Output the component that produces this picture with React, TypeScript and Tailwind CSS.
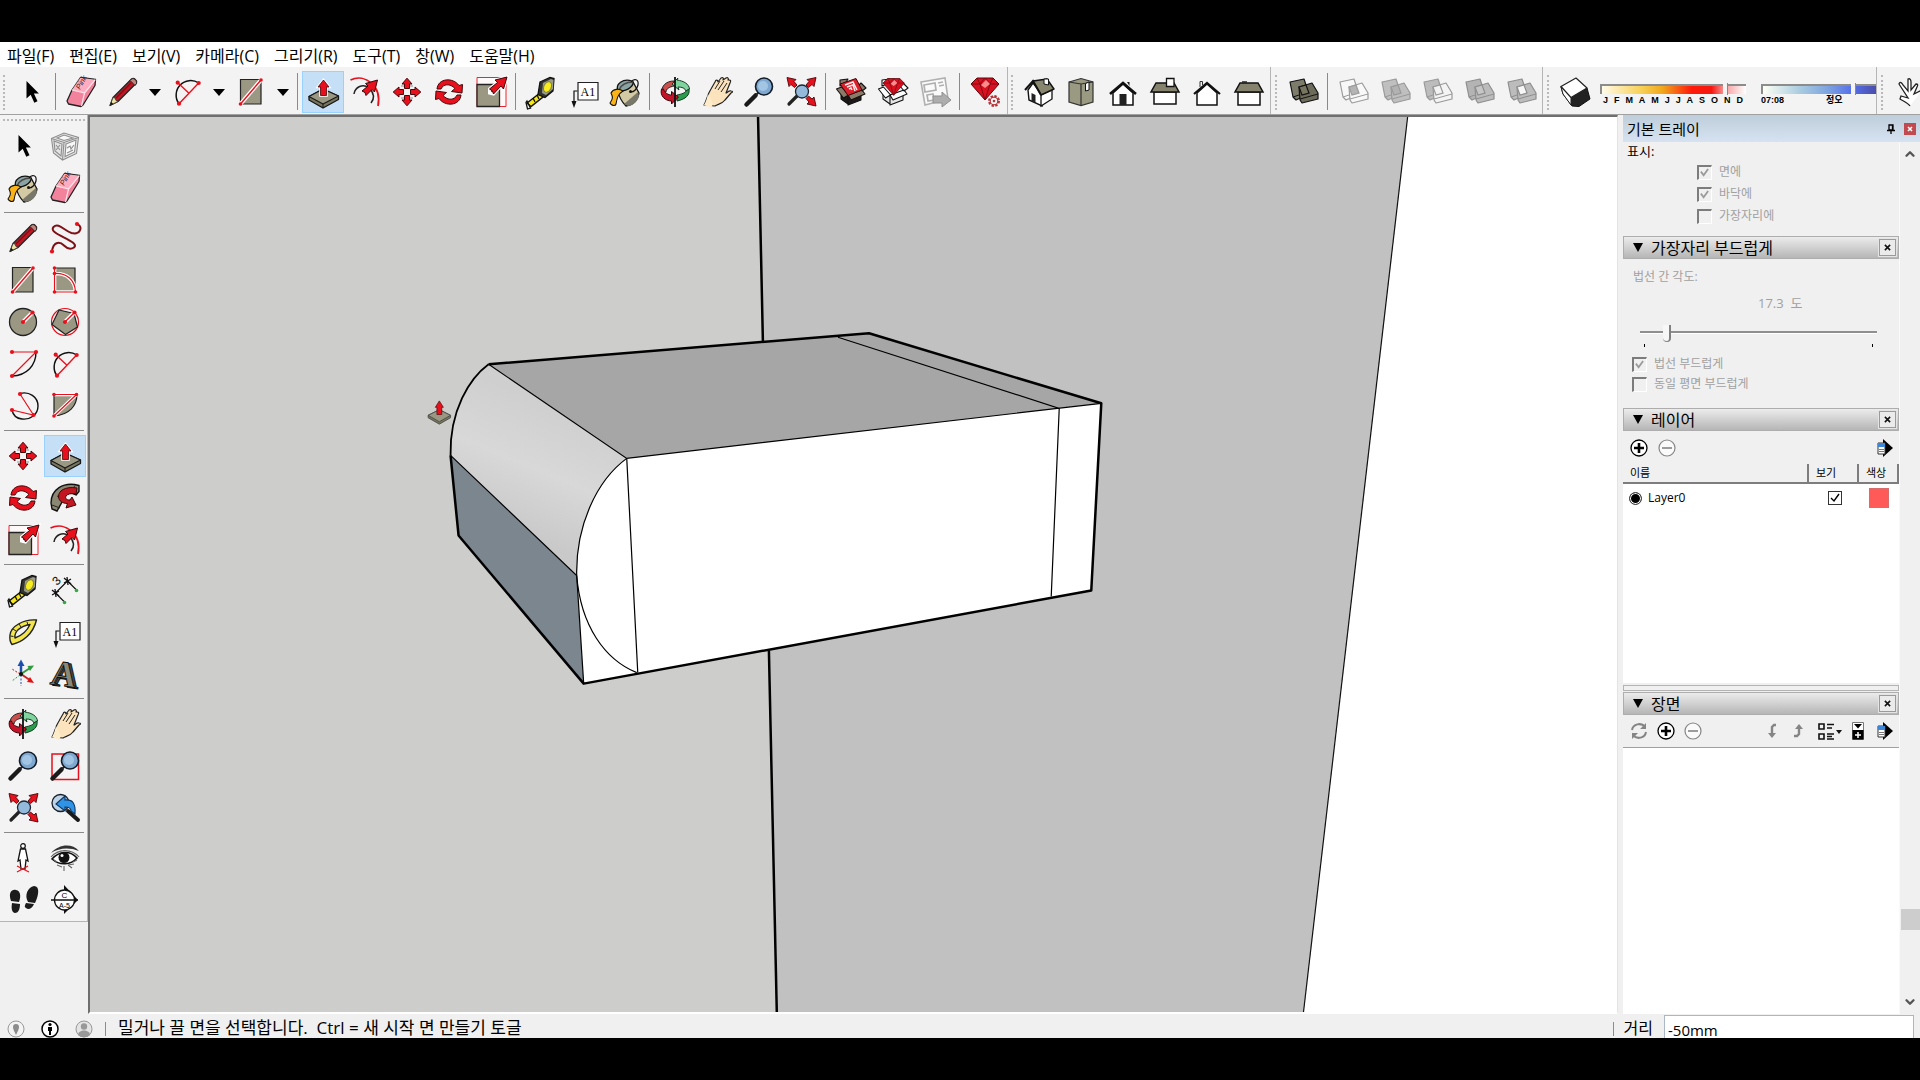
import React from 'react';
import clsx from 'clsx';
import { ChevronDown, ChevronUp } from 'lucide-react';

type SvgProps = { children: React.ReactNode };

const RED = '#e8101c';
const OLIVE = '#9a9883';

const Svg = ({ children }: SvgProps) => (
  <svg viewBox="0 0 32 32" className="h-8 w-8 shrink-0 overflow-visible" fill="none" aria-hidden="true">
    {children}
  </svg>
);

const Dots = ({ at, r = 2.1 }: { at: number[][]; r?: number }) => (
  <>
    {at.map(([x, y]) => (
      <circle key={`${x}-${y}`} cx={x} cy={y} r={r} fill={RED} />
    ))}
  </>
);

/* ---------- drawing tools ---------- */

const SelectIcon = () => (
  <Svg>
    <path d="M11.5 5v17.5l4.2-3.8 3.6 8 3.2-1.5-3.6-7.6h5z" fill="#000" />
  </Svg>
);

const ComponentIcon = () => (
  <Svg>
    <g stroke="#8e8e8e" strokeWidth="1.1" fill="#e4e4e4">
      <path d="M2.5 8.5 15 3l14.5 4.5-2 16L13.5 30l-9-7z" />
      <path d="m2.500 8.5 12.5 4 14.5-5M15 12.5 13.5 30M5 11l8 3-1 12-6-5z" />
      <path d="m17 14 10-4-1.500 12-9.500 4.500zM8 8l7-3 9 3-9 2.500z" fill="#f8f8f8" />
      <path d="m7 15 4 5m0-5-4 5m11-2 3-2 1 3 3-4m-7 8 6-3" />
    </g>
  </Svg>
);

const PaintIcon = () => (
  <Svg>
    <path d="m9 15 15-9 6 11c-1 7-6 12-13 13-4-4-7-9-8-15z" fill="#d3caa4" stroke="#111" strokeWidth="1.3" />
    <path d="m15 28 14-12 1 4c-1 5-5 9-11 10z" fill="#78776a" />
    <path d="M9 15C6 8 14 2 23 5c4 3-4 11-14 10z" fill="#8aa3a5" stroke="#111" strokeWidth="1.3" />
    <path d="M10 14C12 9 17 6 24 6" stroke="#4a4a44" strokeWidth="1.6" />
    <path d="M22 6c3-4 8-3 7 3-1 4-4 7-7 7" stroke="#111" strokeWidth="1.2" />
    <circle cx="21.5" cy="15.500" r="1.5" fill="#111" />
    <path d="M2 17c2-4 8-5 12-2-5 3-6 7-7 13-1 3-5 1-6-1 3-4 3-6 1-10z" fill="#fcb316" stroke="#111" strokeWidth="1.1" />
  </Svg>
);

const EraserIcon = () => (
  <Svg>
    <path d="M2 25 7 14 15.500 1.5l15 2-.5 6L18 29l-2 1.500L3.500 28z" fill="#f3839c" stroke="#222" strokeWidth="1.3" strokeLinejoin="round" />
    <path d="M7 14 15.5 1.800l14.700 2L19.500 17z" fill="#ffacc0" />
    <path d="m7 14 12.500 3-3 13m3-13L30.300 3.700" stroke="#ffe4ea" strokeWidth="1.2" />
    <text x="0" y="0" transform="translate(15 14) rotate(-61)" fontSize="7.5" fontFamily="Liberation Sans" fontStyle="italic" fill="#3a1d25">Pink</text>
  </Svg>
);

const PencilIcon = () => (
  <Svg>
    <path d="m3 29.500 3-8L24.500 3c2-2 6 1 5 4L11 25.500z" fill="#c61420" stroke="#222" strokeWidth="1.2" strokeLinejoin="round" />
    <path d="m3 29.500 3-8 2 .5 1 2.500 2 1z" fill="#efe3a3" stroke="#333" strokeWidth=".8" />
    <path d="m3 29.500 1.300-3.500 2 2z" fill="#111" />
    <path d="m23 4.500 5 5 1.500-2c.5-3-2.500-6-5-4.500z" fill="#c2857c" stroke="#222" />
    <path d="M9 22 24 7" stroke="#731018" strokeWidth="1.3" />
  </Svg>
);

const FreehandIcon = () => (
  <Svg>
    <path d="M3 29.500c1-9 7-11 12-6 4 4 7 4 10 2 3-3-1-5-8-9C9 12.500 1 9 4.500 5c5-5 11 4 18 6 8 2 12-5 6-9" stroke="#7e1016" strokeWidth="2" />
    <Dots at={[[3, 29.5], [28, 2]]} />
  </Svg>
);

const ArcIcon = () => (
  <Svg>
    <path d="M27.700 7A14.500 14.500 0 0 0 8 27.700" stroke="#111" strokeWidth="1.5" />
    <path d="M27.700 7 8 27.700M6.700 6.700 18 17.300" stroke={RED} strokeWidth="1.4" />
    <Dots at={[[6.7, 6.7], [27.7, 7], [8, 27.7]]} />
  </Svg>
);

const RectIcon = () => (
  <Svg>
    <path d="M5.500 3.500H26V28H5.500z" fill={OLIVE} stroke="#222" strokeWidth="1.2" />
    <path d="M5.500 28 26 4" stroke="#fff" strokeWidth="4" />
    <path d="M5.500 28 26 4" stroke={RED} strokeWidth="1.4" />
    <Dots at={[[5.5, 28], [26, 4]]} r={1.8} />
  </Svg>
);

const RotatedRectIcon = () => (
  <Svg>
    <path d="M6 4h20v24H6z" fill={OLIVE} stroke="#222" strokeWidth="1.2" />
    <path d="M5.500 4v24h21C26 16 18 9 5.500 9.500" stroke="#fff" strokeWidth="3.6" />
    <path d="M5.500 4v24h21C26 16 18 9 5.500 9.500" stroke={RED} strokeWidth="1.2" />
    <Dots at={[[5.5, 4], [5.5, 9.5], [5.5, 28], [26.5, 28]]} r={1.8} />
  </Svg>
);

const CircleIcon = () => (
  <Svg>
    <circle cx="16" cy="16" r="13.5" fill={OLIVE} stroke="#222" strokeWidth="1.3" />
    <path d="m16 16 9.500-9.500" stroke="#fff" strokeWidth="4" />
    <path d="m16 16 9.500-9.500" stroke={RED} strokeWidth="1.4" />
    <Dots at={[[16, 16], [25.5, 6.5]]} />
  </Svg>
);

const PolygonIcon = () => (
  <Svg>
    <circle cx="16" cy="16" r="13.5" stroke={RED} strokeWidth="1.2" />
    <path d="m10 4 15 3.500 3.500 13.500-12 7.500L3 18.500z" fill={OLIVE} stroke="#222" strokeWidth="1.2" />
    <path d="m16 16 9.500-9.500" stroke="#fff" strokeWidth="4" />
    <path d="m16 16 9.500-9.500" stroke={RED} strokeWidth="1.4" />
    <Dots at={[[16, 16], [25.5, 6.5]]} />
  </Svg>
);

const CenterArcIcon = () => (
  <Svg>
    <path d="M29 4c0 13-9 23.500-24 24" stroke="#111" strokeWidth="1.4" />
    <path d="M5 4h24L5 28" stroke={RED} strokeWidth="1.2" />
    <Dots at={[[5, 4], [29, 4], [5, 28]]} />
  </Svg>
);

const ThreePointArcIcon = () => (
  <Svg>
    <path d="M13 3.500C22 1 31 7 31 16s-8 14-16 13c-5-.5-9-4-10-9" stroke="#111" strokeWidth="1.4" />
    <path d="M13 4 26.500 25 5 20" stroke={RED} strokeWidth="1.2" />
    <Dots at={[[13, 4], [26.5, 25], [5, 20]]} />
  </Svg>
);

const PieIcon = () => (
  <Svg>
    <path d="M5 4h23c0 12-8 21-23 22z" fill={OLIVE} stroke="#222" strokeWidth="1.2" />
    <path d="M5 4.500h22.500L5 26" stroke="#fff" strokeWidth="3.4" />
    <path d="M5 4.500h22.500L5 26" stroke={RED} strokeWidth="1.2" />
    <Dots at={[[5, 4.5], [27.5, 4.5], [5, 26]]} r={1.8} />
  </Svg>
);

/* ---------- modify tools ---------- */

const PushPullIcon = () => (
  <Svg>
    <path d="M2 20.500V24l14 8 15.500-8.500V20L16 13z" fill="#77775f" stroke="#161616" strokeWidth="1.3" strokeLinejoin="round" />
    <path d="M2 20.500 16 13l15.500 7L16 28z" fill={OLIVE} stroke="#161616" strokeWidth="1.1" strokeLinejoin="round" />
    <path d="M16 28v4" stroke="#161616" />
    <path d="m16.500 4 5.500 7h-2.500v8.500h-6V11H11z" fill={RED} stroke="#fff" strokeWidth="2.6" />
    <path d="m16.500 4 5.500 7h-2.500v8.500h-6V11H11z" fill={RED} stroke="#480609" strokeWidth=".8" />
  </Svg>
);

const OffsetIcon = () => (
  <Svg>
    <path d="M1.500 4C16-3 33 10 29 30" stroke={RED} strokeWidth="1.8" />
    <path d="M5 18c1-7 9-11 15-6 5 5 6 10 2 15" stroke="#222" strokeWidth="1.5" />
    <path d="m13 15 6-5-2.500-2.500 12-3.500-3 12-2.500-2.500-6 6-1-3z" fill={RED} stroke="#3c0508" />
  </Svg>
);

const MoveIcon = () => (
  <Svg>
    {[0, 90, 180, 270].map((deg) => (
      <path key={deg} transform={`rotate(${deg} 16 16)`} d="m16 2.200 5 5.800h-2.500v4.500h-5V8H11z" fill={RED} stroke="#47070a" />
    ))}
    <path d="M10 10h3m6 0h3m-12 12h3m6 0h3" stroke="#555" strokeWidth=".6" />
  </Svg>
);

const RotateIcon = () => (
  <Svg>
    {[0, 180].map((deg) => (
      <path
        key={deg}
        transform={`rotate(${deg} 16 16)`}
        d="M4 13C5 2 20 1 26 9.500l3.500-1L29 17l-10.500-1.500 3.500-3C17 7 10 8 8 13z"
        fill={RED}
        stroke="#47070a"
      />
    ))}
  </Svg>
);

const FollowMeIcon = () => (
  <Svg>
    <path d="M2 21C2 8 14-1 30 3.500v6L27 13C18 8 12 12 13 20l-5 9-5-2z" fill="#8a8873" stroke="#111" strokeWidth="1.4" />
    <path d="M26 3.500c-2 3-2 6 0 9M8 14l8 3M3 23l8 3" stroke="#222" />
    <path d="M28 6C16 4 9 9 9.500 15c.5 4 4 6.500 9 6.500L17 26l10-3-4-8-2 3c-4 0-5-2-4-4 1.500-2 5-3 10-2z" fill="#c21720" stroke="#3f070a" />
  </Svg>
);

const ScaleIcon = () => (
  <Svg>
    <path d="M2 1.500h29v29H2z" fill="#fff8f8" stroke={RED} strokeWidth=".9" />
    <path d="M2 8.500h22.500v22H2z" fill={OLIVE} stroke="#222" strokeWidth="1.3" />
    <path d="m14.500 13 8-6.500L20 4l12-3-3.500 12L26 10l-7.500 8-4-1z" fill={RED} stroke="#fff" strokeWidth="3" />
    <path d="m14.500 13 8-6.500L20 4l12-3-3.500 12L26 10l-7.500 8-1-3z" fill={RED} stroke="#3c0508" />
  </Svg>
);

/* ---------- construction tools ---------- */

const TapeIcon = () => (
  <Svg>
    <path d="m2 27 13-10 3 4-12 9.500z" fill="#f6e71b" stroke="#111" strokeWidth="1.4" />
    <path d="m2 25 3.500 7-3 1L1 26.500zM8 22l2 4m2-7 2 4" stroke="#111" strokeWidth="1.3" />
    <path d="m15 6 10-4.500 4 1L28 15l-8 6.500-7-3z" fill="#34342f" stroke="#111" strokeWidth="1.3" />
    <path d="m18 7 8-4 2.500 1-.5 9-7 6-4-2z" fill="#9b9b8b" />
    <ellipse cx="22.5" cy="11" rx="3.6" ry="5.5" transform="rotate(25 22.5 11)" fill="#f8ed21" stroke="#6d6b20" strokeWidth=".7" />
  </Svg>
);

const DimensionIcon = () => (
  <Svg>
    <path d="m6.500 19 12-12m-12 12 9 9m3-21 9 9" stroke="#111" strokeWidth="1.1" />
    <path d="m3 16 7 6m-7-1 7-4m-4-2 1 8m8-19 7 6m-7-1 7-4m-4-2 1 8" stroke="#111" strokeWidth="1.3" />
    <circle cx="15.5" cy="28.5" r="1.8" fill="#35a845" />
    <circle cx="27.5" cy="16.5" r="1.8" fill="#35a845" />
    <text x="0" y="0" transform="translate(8 12) rotate(-45)" fontSize="12" fontFamily="Liberation Sans" fill="#111">3</text>
  </Svg>
);

const ProtractorIcon = () => (
  <Svg>
    <path
      d="M29.500 4C17 3 4 10 3 19c-.5 4 0 7 2 9.500C16 26 26 18 29.500 4zM23 8.500C20 15 15 19.500 8 22c-1-6 5-12 15-13.500z"
      fill="#f3e64a"
      fillRule="evenodd"
      stroke="#222"
      strokeWidth="1.4"
      strokeLinejoin="round"
    />
    <path d="m3.500 20 3 .5M6 13l3 2m3-7 2 3m6-5 1 3" stroke="#222" />
  </Svg>
);

const TextIcon = () => (
  <Svg>
    <path d="M11 6.500h20V24H11z" fill="#fff" stroke="#222" strokeWidth="1.2" />
    <path d="M10.500 15H7v11" stroke="#111" strokeWidth="1.2" />
    <path d="M4.500 25h5L7 32z" fill="#111" />
    <text x="13.5" y="19.5" fontSize="12" fontFamily="Liberation Serif" fill="#000">A1</text>
  </Svg>
);

const AxesIcon = () => (
  <Svg>
    <path d="M14 16V6" stroke="#1b4fae" strokeWidth="2.5" />
    <path d="m14 1.500 3.500 6.500h-7z" fill="#1b4fae" />
    <path d="m14 16 9-6" stroke="#2e9a3e" strokeWidth="2" />
    <path d="m27 7.500-6.500.5 2.500 5z" fill="#2e9a3e" />
    <path d="m14 16 8 5.500" stroke="#c22" strokeWidth="2" />
    <path d="m27 25-7-1 3-5z" fill="#d11" />
    <path d="M14 17v11" stroke="#1b4fae" strokeDasharray="2 1.5" />
    <path d="m13 16-8-5" stroke="#d11" strokeDasharray="2 1.5" />
    <path d="m13 17-8 6" stroke="#2e9a3e" strokeDasharray="2 1.5" />
    <circle cx="14" cy="16" r="2" fill="#111" />
  </Svg>
);

const Text3DIcon = () => (
  <Svg>
    <g fontSize="36" fontWeight="bold" fontFamily="Liberation Serif" stroke="#111" transform="rotate(8 16 16)">
      <text x="5" y="29" fill="#4c4b42">A</text>
      <text x="2" y="28" fill="#8a8978">A</text>
    </g>
  </Svg>
);

/* ---------- camera tools ---------- */

const OrbitIcon = () => (
  <Svg>
    <path d="M15 5C7 5 2 10 3 17l4-1c0-3 3-5 8-6z" fill="#c9504c" stroke="#222" />
    <path d="M18 4c7 1 12 4 12.500 9L27 15c-1-3-4-4-8-4l1 3-7-6 6-6z" fill="#7fd39c" stroke="#173c23" />
    <path d="M30 13c1 6-3 10-12 12v-6c5-1 8-2 9-4z" fill="#2a9c4d" stroke="#173c23" />
    <path d="M2.500 13c-2 7 4 12 10 12v3l7-7-7-5.500V19c-3 0-7-2-8-6z" fill="#c4142a" stroke="#3c0508" />
    <path d="M16 1v30" stroke="#111" strokeWidth="1.8" />
  </Svg>
);

const HandIcon = () => (
  <Svg>
    <path d="M3 29c3-5 3-10 7-16l4-7c1-3 3-2 3 0l3-4c2-1 3 0 2 2l3-2c2-1 3 1 2 2h1c2 0 2 1 1 3l-4 10c1 0 3-3 5-2 2 0 2 1 0 2l-6 7c-3 4-7 4-10 6z" fill="#fbe3bd" stroke="#222" strokeWidth="1.2" strokeLinejoin="round" />
    <path d="m14 13 5-8m-2 9 6-9m-3 11 6-9" stroke="#222" />
    <path d="M3 29c2-3 3-7 4-11l5 10-2 4z" fill="#fdecc9" />
  </Svg>
);

const Lens = () => (
  <>
    <path d="m3.500 28.500 9-9" stroke="#1a1a1a" strokeWidth="4.5" strokeLinecap="round" />
    <path d="m13 19 3-3" stroke="#222" strokeWidth="2" />
    <circle cx="21" cy="10.5" r="8.5" fill="#7fa8d0" stroke="#141c28" strokeWidth="1.6" />
    <circle cx="20" cy="10" r="5" fill="#a3c5e4" />
  </>
);

const ZoomIcon = () => (
  <Svg>
    <Lens />
  </Svg>
);

const ZoomWindowIcon = () => (
  <Svg>
    <path d="M3 4h26.500v25.500H3z" stroke={RED} strokeWidth="1.5" />
    <Lens />
  </Svg>
);

const ZoomExtentsIcon = () => (
  <Svg>
    <path d="m4 28 8-8" stroke="#222" strokeWidth="3.2" strokeLinecap="round" />
    <circle cx="17" cy="15.5" r="6.5" fill="#93b9db" stroke="#1c2633" strokeWidth="1.3" />
    {[[2, 1.5, 0], [31, 1.5, 90], [31, 30, 180]].map(([x, y, deg]) => (
      <path key={deg} transform={`translate(${x} ${y}) rotate(${deg})`} d="M0 0 9 2 7 4l3 3.500L7.500 10 4 7 2 9z" fill={RED} stroke="#47070a" strokeWidth=".9" />
    ))}
  </Svg>
);

const PreviousIcon = () => (
  <Svg>
    <circle cx="11.5" cy="11" r="8.5" fill="#bcd3e8" stroke="#17202b" strokeWidth="1.3" />
    <path d="m19 19 10 9" stroke="#1a1a1a" strokeWidth="4" strokeLinecap="round" />
    <path d="m7 12 9-8v4c7-1 11 3 10 14l-4-3c0-3-2-4-6-4v4z" fill="#2f93e8" stroke="#0c3460" strokeWidth="1.1" />
  </Svg>
);

const PositionCameraIcon = () => (
  <Svg>
    <circle cx="16" cy="4" r="2.3" fill="#fff" stroke="#111" strokeWidth="1.2" />
    <path d="M13.500 7h5L21 19l-2-1-1 9h-4l-1-9-2 1z" fill="#fff" stroke="#111" strokeWidth="1.3" />
    <path d="m10 30 11-6m-11 0 12 6" stroke={RED} strokeWidth="1.3" />
  </Svg>
);

const EyeIcon = () => (
  <Svg>
    <path d="M2 11C10 2 23 1 30 9c-10-4-20-3-28 2z" fill="#333" />
    <path d="M3 17c7-8 18-9 25-1-6 7-17 8-25 1z" fill="#fff" stroke="#111" strokeWidth="1.6" />
    <circle cx="15" cy="15.5" r="5.5" fill="#111" />
    <circle cx="13" cy="13.5" r="1.5" fill="#fff" />
    <path d="M2 15C9 7 22 6 30 15M8 23l5 2m2-1v5m4-6 4 3m1-6 4-2m-9 5 6-1m-17-2-3-2" stroke="#666" strokeWidth="1.1" />
  </Svg>
);

const WalkIcon = () => (
  <Svg>
    <path d="M4 17C1 8 5 5 9 6c5 1 5 7 3 12z" fill="#1b1b1b" />
    <path d="m5 19 8 1c0 6-2 9-5 9-3-.5-4-4-3-10zM21 18c-4-7 0-15 6-16 6 0 5 9 1 17z" fill="#1b1b1b" />
    <path d="m19 19 8 1c-2 5-6 6-8 4-2-1-1-3 0-5z" fill="#1b1b1b" />
  </Svg>
);

const SectionIcon = () => (
  <Svg>
    <path d="m15 1 14 15-14 14z" fill="#111" />
    <circle cx="15.5" cy="16" r="10" fill="#fff" stroke="#111" strokeWidth="1.3" />
    <path d="M2 16h27" stroke="#111" strokeWidth="1.5" />
    <text x="15.5" y="13.5" fontSize="8" textAnchor="middle" fontFamily="Liberation Sans" fill="#000">C</text>
    <text x="15.5" y="23.5" fontSize="7" textAnchor="middle" fontFamily="Liberation Sans" fill="#000">A-5</text>
  </Svg>
);

/* ---------- warehouse ---------- */

const Carton = ({ flap, side }: { flap: string; side: string }) => (
  <g stroke="#111" strokeWidth="1.1" strokeLinejoin="round">
    <path d="m6 13 7 6v9l-7-5zM13 19l13-4v9l-13 5z" fill={side} />
    <path d="m1.500 13 5-2 7 8-5 3zM26 7l5 5-4 3-4-5zM13 19l14-5 3 4-14 6zM5 4l8-1-3 5-5 2z" fill={flap} />
  </g>
);

const WarehouseIcon = () => (
  <Svg>
    <Carton flap="#8b7a68" side="#1c1917" />
    <path d="m5 8 16-5.500 6 11.500-14 5.500z" fill="#d9202b" stroke="#3c0508" strokeLinejoin="round" />
    <path d="m10 9 8-3 4 8m-10-3 6-2 2 6m-6-2 2-1 1 2" stroke="#ffe9e9" strokeWidth="1.5" />
  </Svg>
);

const Gem = () => (
  <>
    <path d="m2 8 6-6h16l6 6-14 16z" fill="#d8101f" stroke="#5a070d" />
    <path d="M2 8h28M8 2l3 6 5-6 5 6 3-6M11 8l5 16 5-16" stroke="#7d0912" strokeWidth=".9" />
    <path d="m17 4 4 4-5 4-4-3z" fill="#ff8b8b" />
  </>
);

const ExtensionWarehouseIcon = () => (
  <Svg>
    <Carton flap="#fff" side="#e6e6e6" />
    <g transform="translate(4.5 1) scale(.76)">
      <Gem />
    </g>
  </Svg>
);

const LayoutIcon = () => (
  <Svg>
    <path d="m2 6 24-4 3 21-23 6z" fill="#fafafa" stroke="#b0b0b0" strokeWidth="1.6" />
    <path d="m5 9 11-2 1 7-11 2zM19 7l5-1m-4 4 5-1M8 19l6-1 1 6-6 1z" stroke="#b0b0b0" strokeWidth="1.7" />
    <path d="M14 20h9v-4l9 8-9 7v-4h-9z" fill="#adadad" stroke="#8f8f8f" />
  </Svg>
);

const ExtensionManagerIcon = () => (
  <Svg>
    <Gem />
    <circle cx="25" cy="25" r="4.5" fill="#fff" stroke="#b5343a" strokeWidth="3" strokeDasharray="2.2 1.3" />
    <circle cx="25" cy="25" r="3.8" fill="#f4f4f4" stroke="#b5343a" strokeWidth="1.2" />
    <circle cx="25" cy="25" r="1.3" fill="#b5343a" />
  </Svg>
);

/* ---------- views ---------- */

const IsoIcon = () => (
  <Svg>
    <path d="m5 14 5-7 9 11v12L6 24z" fill="#fff" stroke="#111" strokeWidth="1.4" />
    <path d="m18 19 11-5v9l-11 7z" fill="#fff" stroke="#111" strokeWidth="1.3" />
    <path d="m8.500 25v-8l4 2v8z" fill="#222" />
    <path d="m10 5 14-2 7 10-13 6z" fill="#88866f" stroke="#111" strokeWidth="1.4" strokeLinejoin="round" />
    <path d="m2 14 8-9 8 14" stroke="#111" strokeWidth="2" />
    <path d="M21 8V3h4.500v6z" fill="#fff" stroke="#111" />
  </Svg>
);

const TopIcon = () => (
  <Svg>
    <path d="m4 6 12-3.500L28 6v20l-12 3.500L4 26z" fill="#9a9981" stroke="#333" strokeWidth="1.2" />
    <path d="M16 8v21.500M4 6l12 2 12-2" stroke="#333" strokeWidth="1.2" />
    <path d="M20.500 7.500 24 6v8l-3.500 1z" fill="#fff" stroke="#111" />
  </Svg>
);

const FrontIcon = () => (
  <Svg>
    <path d="M6 17v12h20V17L16 8z" fill="#fff" stroke="#111" strokeWidth="1.5" />
    <path d="M3 18 16 7l13 11" stroke="#111" strokeWidth="2.6" />
    <path d="M12.500 18h7v11h-7zM20 6h2.500v4z" fill="#222" />
  </Svg>
);

const RightIcon = () => (
  <Svg>
    <path d="M5 16h22v12H5z" fill="#fff" stroke="#111" strokeWidth="1.5" />
    <path d="M7 7h18l5 9H2z" fill="#85836e" stroke="#111" strokeWidth="1.5" />
    <path d="M17.500 2.500H25v8h-7.500z" fill="#fff" stroke="#111" strokeWidth="1.3" />
  </Svg>
);

const BackIcon = () => (
  <Svg>
    <path d="M6 17v12h20V17L16 8z" fill="#fff" stroke="#111" strokeWidth="1.5" />
    <path d="M3 18 16 7l13 11" stroke="#111" strokeWidth="2.2" />
    <path d="M9 11V5.500h2.500V9" stroke="#333" />
  </Svg>
);

const LeftIcon = () => (
  <Svg>
    <path d="M5 16h22v13H5z" fill="#fff" stroke="#111" strokeWidth="1.5" />
    <path d="M7 7h18l5 9H2z" fill="#85836e" stroke="#111" strokeWidth="1.5" />
    <path d="M9 6h5" stroke="#222" strokeWidth="1.5" />
  </Svg>
);

/* ---------- solid tools ---------- */

type SolidProps = { a: string; b: string; mid: string; line: string };

const Solid = ({ a, b, mid, line }: SolidProps) => (
  <Svg>
    <path d="m3 6 14-3 5 15-13 6-3-3z" fill={a} stroke={line} strokeWidth="1.2" strokeLinejoin="round" />
    <path d="m6 21 12-4" stroke={line} />
    <path d="m12 11 13-4 6 10v6l-16 4-2-3z" fill={b} stroke={line} strokeWidth="1.2" strokeLinejoin="round" />
    <path d="m13 23 18-5" stroke={line} />
    <path d="m12 11 7-2 3 8-7 2z" fill={mid} stroke={line} strokeWidth="1.2" />
  </Svg>
);

const OuterShellIcon = () => <Solid a="#7d7b69" b="#6d6b5a" mid="#77755f" line="#111" />;
const IntersectIcon = () => <Solid a="#f8f8f8" b="#f8f8f8" mid="#b4b4b4" line="#9b9b9b" />;
const UnionIcon = () => <Solid a="#bfbfbf" b="#bfbfbf" mid="#b2b2b2" line="#999" />;
const SubtractIcon = () => <Solid a="#bcbcbc" b="#f4f4f4" mid="#f2f2f2" line="#999" />;
const TrimIcon = () => <Solid a="#b4b4b4" b="#bcbcbc" mid="#c6c6c6" line="#8e8e8e" />;
const SplitIcon = () => <Solid a="#bcbcbc" b="#bcbcbc" mid="#f7f7f7" line="#8e8e8e" />;

const ShadowIcon = () => (
  <Svg>
    <path d="m2 11 2 7 9 12 7 .5L31 23l-3-11z" fill="#222" stroke="#111" />
    <path d="m2 10.500 2 7.500 8 11v-8z" fill="#fff" stroke="#222" />
    <path d="M2 10.500 17 2l11 10-16 9.500z" fill="#fff" stroke="#222" strokeWidth="1.2" strokeLinejoin="round" />
  </Svg>
);

const InteractIcon = () => (
  <Svg>
    <path d="M17 30c-2-3-7-5-10-7l1-3 7 2L6 8c1-3 3-1 4 1l5 6V3c2-1 3 1 3 3v8l5-6c2 0 2 1 1 3l-3 7 8-4" fill="#fff" stroke="#222" strokeWidth="1.3" />
  </Svg>
);

/* ---------- toolbars ---------- */

type Tool = { id: string; label: string; icon: () => React.ReactElement; menu?: boolean; disabled?: boolean };

const tool = (id: string, label: string, icon: Tool['icon'], extra: Partial<Tool> = {}): Tool => ({ id, label, icon, ...extra });

const mainTools: Tool[][] = [
  [tool('select', '선택', SelectIcon)],
  [
    tool('eraser', '지우개', EraserIcon),
    tool('line', '선', PencilIcon, { menu: true }),
    tool('arc', '호', ArcIcon, { menu: true }),
    tool('rect', '직사각형', RectIcon, { menu: true }),
  ],
  [
    tool('push', '밀기/끌기', PushPullIcon),
    tool('offset', '오프셋', OffsetIcon),
    tool('move', '이동', MoveIcon),
    tool('rotate', '회전', RotateIcon),
    tool('scale', '배율', ScaleIcon),
  ],
  [tool('tape', '줄자', TapeIcon), tool('text', '텍스트', TextIcon), tool('paint', '페인트통', PaintIcon)],
  [
    tool('orbit', '궤도', OrbitIcon),
    tool('pan', '이동 보기', HandIcon),
    tool('zoom', '확대/축소', ZoomIcon),
    tool('extents', '범위 확대', ZoomExtentsIcon),
  ],
  [
    tool('warehouse', '3D Warehouse', WarehouseIcon),
    tool('extensions', 'Extension Warehouse', ExtensionWarehouseIcon),
    tool('layout', 'LayOut', LayoutIcon, { disabled: true }),
  ],
  [tool('manager', '확장 관리자', ExtensionManagerIcon)],
];

const viewTools: Tool[] = [
  tool('iso', '등각', IsoIcon),
  tool('top', '위', TopIcon),
  tool('front', '앞', FrontIcon),
  tool('right', '오른쪽', RightIcon),
  tool('back', '뒤', BackIcon),
  tool('left', '왼쪽', LeftIcon),
];

const solidTools: Tool[] = [
  tool('intersect', '교차', IntersectIcon),
  tool('union', '합집합', UnionIcon),
  tool('subtract', '빼기', SubtractIcon),
  tool('trim', '자르기', TrimIcon),
  tool('split', '분할', SplitIcon),
];

const paletteTools: Tool[][] = [
  [
    tool('select', '선택', SelectIcon),
    tool('component', '구성요소 만들기', ComponentIcon),
    tool('paint', '페인트통', PaintIcon),
    tool('eraser', '지우개', EraserIcon),
  ],
  [
    tool('line', '선', PencilIcon),
    tool('freehand', '자유형', FreehandIcon),
    tool('rect', '직사각형', RectIcon),
    tool('rotrect', '회전된 직사각형', RotatedRectIcon),
    tool('circle', '원', CircleIcon),
    tool('polygon', '다각형', PolygonIcon),
    tool('centerarc', '호', CenterArcIcon),
    tool('arc', '2점 호', ArcIcon),
    tool('arc3', '3점 호', ThreePointArcIcon),
    tool('pie', '파이', PieIcon),
  ],
  [
    tool('move', '이동', MoveIcon),
    tool('push', '밀기/끌기', PushPullIcon),
    tool('rotate', '회전', RotateIcon),
    tool('follow', '따라가기', FollowMeIcon),
    tool('scale', '배율', ScaleIcon),
    tool('offset', '오프셋', OffsetIcon),
  ],
  [
    tool('tape', '줄자', TapeIcon),
    tool('dimension', '치수', DimensionIcon),
    tool('protractor', '각도기', ProtractorIcon),
    tool('text', '텍스트', TextIcon),
    tool('axes', '축', AxesIcon),
    tool('text3d', '3D 텍스트', Text3DIcon),
  ],
  [
    tool('orbit', '궤도', OrbitIcon),
    tool('pan', '이동 보기', HandIcon),
    tool('zoom', '확대/축소', ZoomIcon),
    tool('zoomwin', '창 확대', ZoomWindowIcon),
    tool('extents', '범위 확대', ZoomExtentsIcon),
    tool('previous', '이전', PreviousIcon),
  ],
  [
    tool('camera', '카메라 배치', PositionCameraIcon),
    tool('look', '둘러보기', EyeIcon),
    tool('walk', '걷기', WalkIcon),
    tool('section', '단면', SectionIcon),
  ],
];

type ButtonProps = { item: Tool; active: string; onPick: (id: string) => void };

const ToolButton = ({ item, active, onPick }: ButtonProps) => {
  const Icon = item.icon;
  return (
    <button
      type="button"
      aria-label={item.label}
      aria-pressed={active === item.id}
      disabled={item.disabled}
      onClick={() => onPick(item.id)}
      className={clsx(
        'flex h-[42px] w-[42px] shrink-0 items-center justify-center border',
        active === item.id ? 'border-[#99d1ff] bg-[#c5dff6]' : 'border-transparent'
      )}
    >
      <Icon />
    </button>
  );
};

const Grip = () => <div className="my-1 mr-1 w-[3px] shrink-0 border-l-2 border-dotted border-[#b9b9b9]" />;
const Divider = () => <div className="mx-[3px] mt-0.5 mb-1 w-0.5 shrink-0 border-l border-[#8a8a8a]" />;

const months = ['J', 'F', 'M', 'A', 'M', 'J', 'J', 'A', 'S', 'O', 'N', 'D'];

const rangeBase =
  'block h-3 w-full appearance-none bg-transparent [&::-webkit-slider-runnable-track]:h-[10px] [&::-webkit-slider-runnable-track]:border-t-2 [&::-webkit-slider-runnable-track]:border-l-2 [&::-webkit-slider-runnable-track]:border-[#8c8c8c] [&::-webkit-slider-thumb]:-mt-[3px] [&::-webkit-slider-thumb]:h-3 [&::-webkit-slider-thumb]:w-[5px] [&::-webkit-slider-thumb]:appearance-none [&::-webkit-slider-thumb]:border-r [&::-webkit-slider-thumb]:border-[#888] [&::-webkit-slider-thumb]:bg-[#f4f4f4]';

function ShadowSliders() {
  return (
    <>
      <div className="ml-1 w-[146px] shrink-0 pt-3">
        <input
          type="range"
          aria-label="날짜"
          defaultValue={87}
          className={clsx(rangeBase, '[&::-webkit-slider-runnable-track]:bg-[linear-gradient(90deg,#fffbea,#f7cf52_28%,#f0a71c_42%,#ff1a0a_62%,#f5170f_76%,#f59a9a_85%,#fff)]')}
        />
        <div className="flex justify-between px-[3px] font-['Liberation_Sans'] text-[9px] leading-[10px] font-bold">
          {months.map((m, i) => (
            <span key={i}>{m}</span>
          ))}
        </div>
      </div>
      <div className="ml-[15px] w-[115px] shrink-0 overflow-hidden pt-3">
        <div className="w-[146px]">
          <input
            type="range"
            aria-label="시간"
            defaultValue={63}
            className={clsx(rangeBase, '[&::-webkit-slider-runnable-track]:bg-[linear-gradient(90deg,#fdfff4,#a9cbe0_26%,#7fa6e0_44%,#566fea_62%,#4a4aa4_80%,#333388)]')}
          />
        </div>
        <div className="flex gap-[42px] font-['Liberation_Sans','Noto_Sans_CJK_KR',sans-serif] text-[9px] leading-[10px] font-bold">
          <span>07:08</span>
          <span>정오</span>
        </div>
      </div>
    </>
  );
}

function MainToolbar({ active, onPick }: { active: string; onPick: (id: string) => void }) {
  return (
    <div className="flex h-12 items-stretch overflow-hidden border-b border-[#a0a0a0] bg-[#f3f3f3] pl-[3px]">
      <div className="flex shrink-0 border-r border-[#b5b5b5] pt-1 pr-px">
        <Grip />
        {mainTools.map((group, i) => (
          <React.Fragment key={i}>
            {i > 0 && <Divider />}
            {group.map((item) => (
              <React.Fragment key={item.id}>
                <ToolButton item={item} active={active} onPick={onPick} />
                {item.menu && (
                  <button type="button" aria-label={`${item.label} 메뉴`} className="flex w-[22px] items-center justify-center">
                    <span className="border-x-[6px] border-t-[7px] border-x-transparent border-t-black" />
                  </button>
                )}
              </React.Fragment>
            ))}
          </React.Fragment>
        ))}
      </div>
      <div className="flex shrink-0 border-r border-[#b5b5b5] pt-1 pl-[3px]">
        <Grip />
        {viewTools.map((item) => (
          <ToolButton key={item.id} item={item} active={active} onPick={onPick} />
        ))}
      </div>
      <div className="flex shrink-0 border-r border-[#b5b5b5] pt-1 pl-1">
        <Grip />
        <ToolButton item={tool('shell', '외부 쉘', OuterShellIcon)} active={active} onPick={onPick} />
        <Divider />
        {solidTools.map((item) => (
          <ToolButton key={item.id} item={item} active={active} onPick={onPick} />
        ))}
      </div>
      <div className="flex shrink-0 border-r border-[#b5b5b5] pt-1 pl-1">
        <Grip />
        <ToolButton item={tool('shadow', '그림자', ShadowIcon)} active={active} onPick={onPick} />
        <ShadowSliders />
      </div>
      <div className="flex shrink-0 pt-1 pl-1">
        <Grip />
        <ToolButton item={tool('interact', '상호 작용', InteractIcon)} active={active} onPick={onPick} />
      </div>
    </div>
  );
}

function Palette({ active, onPick }: { active: string; onPick: (id: string) => void }) {
  return (
    <aside className="w-[88px] shrink-0 bg-[#f0f0f0]">
      <div className="border-r border-b border-[#b5b5b5] bg-[#f3f3f3] pt-1 pr-px pl-0.5">
        <div className="mx-px mb-1 border-t-2 border-dotted border-[#b9b9b9]" />
        {paletteTools.map((group, i) => (
          <div key={i}>
            {i > 0 && <div className="mx-0.5 my-[3px] h-0.5 border-t border-[#8a8a8a]" />}
            <div className="flex flex-wrap">
              {group.map((item) => (
                <ToolButton key={item.id} item={item} active={active} onPick={onPick} />
              ))}
            </div>
          </div>
        ))}
      </div>
    </aside>
  );
}

/* ---------- modelling canvas ---------- */

function Scene() {
  return (
    <main className="min-w-0 flex-1 border-t-2 border-r border-b-2 border-l-2 border-t-[#6f6f6f] border-r-[#e3e3e3] border-b-white border-l-[#6f6f6f]">
      <svg viewBox="90 117 1527 894" preserveAspectRatio="xMidYMid slice" className="block h-full w-full bg-white" aria-label="모델">
        <defs>
          <linearGradient id="round" x1="540" y1="400" x2="490" y2="520" gradientUnits="userSpaceOnUse">
            <stop offset="0" stopColor="#cfcfcf" />
            <stop offset=".5" stopColor="#d8d8d8" />
            <stop offset="1" stopColor="#c9c9c9" />
          </linearGradient>
        </defs>
        <path d="M80 110h678l20 910H80z" fill="#cdcdcb" />
        <path d="M758 110h650l-106 910H778z" fill="#c1c1c1" />
        <path d="m1407 117-104 894" stroke="#111" strokeWidth="1.2" />
        <path d="m758 110 5 231m6 309 8 366" stroke="#000" strokeWidth="2.5" />

        <path d="M489 364 869 333l232 70-474 55z" fill="#a6a6a6" />
        <path d="M489 364 627 458C597 480 576 525 577 575L451 455C450 410 470 378 489 364z" fill="url(#round)" />
        <path d="m451 455 126 120 7 108L459 535z" fill="#7b868f" />
        <path d="m627 458 474-55-10 187-507 93-7-108C576 525 597 480 627 458z" fill="#fff" />

        <g fill="none" stroke="#000" strokeWidth="1.2">
          <path d="m489 364 138 94 474-55M838 337l221 71-8 188M627 458l11 214M451 455l126 120 7 108" />
          <path d="M627 458C597 480 576 525 577 575c4 50 28 84 60 97" />
        </g>
        <path
          d="M489 364 869 333l232 70-10 187-507 93L459 535l-8-80"
          fill="none"
          stroke="#000"
          strokeWidth="2.5"
          strokeLinejoin="round"
        />
        <path d="M451 455C450 410 470 378 489 364" fill="none" stroke="#000" strokeWidth="1.8" />

        <g transform="translate(427 399) scale(.8)">
          <path d="M2 20v3l14 8 14-8v-3l-14-7z" fill="#77775f" stroke="#444" />
          <path d="m2 20 14-7 14 7-14 8z" fill={OLIVE} stroke="#444" />
          <path d="m16 2 5 8h-2v9h-6v-9h-2z" fill={RED} stroke="#601015" />
        </g>
      </svg>
    </main>
  );
}

/* ---------- tray ---------- */

type CheckProps = { id: string; label: string; checked?: boolean };

const DisabledCheck = ({ id, label, checked = false }: CheckProps) => (
  <div className="flex items-center gap-[7px] text-xs leading-5 text-[#a0a0a0]">
    <span className="grid place-items-center">
      <input
        id={id}
        type="checkbox"
        disabled
        defaultChecked={checked}
        className="peer col-start-1 row-start-1 h-[15px] w-[15px] appearance-none border-t-2 border-r border-b border-l-2 border-t-[#7c7c7c] border-r-white border-b-white border-l-[#7c7c7c]"
      />
      <svg viewBox="0 0 10 10" className="col-start-1 row-start-1 hidden h-[9px] w-[9px] peer-checked:block" fill="none">
        <path d="m1 4 3 4 5-7" stroke="#9a9a9a" strokeWidth="2" />
      </svg>
    </span>
    <label htmlFor={id}>{label}</label>
  </div>
);

const SectionHeader = ({ title }: { title: string }) => (
  <div className="flex h-[23px] shrink-0 items-center border border-[#adadad] bg-linear-to-b from-[#ececec] to-[#b6b6b6] pr-0.5 pl-[9px]">
    <span className="mr-2 border-x-[5px] border-t-[9px] border-x-transparent border-t-black" />
    <h2 className="flex-1 text-base leading-5">{title}</h2>
    <button type="button" aria-label={`${title} 닫기`} className="flex h-[17px] w-[17px] items-center justify-center border border-[#9a9a9a] bg-[#ebebeb] outline outline-[#e4e4e4]">
      <svg viewBox="0 0 8 8" className="h-[7px] w-[7px]" stroke="#111" strokeWidth="1.8">
        <path d="m1 1 6 6m0-6L1 7" />
      </svg>
    </button>
  </div>
);

const PlusCircle = () => (
  <svg viewBox="0 0 18 18" className="h-[18px] w-[18px]" fill="#fff" stroke="#000">
    <circle cx="9" cy="9" r="8" strokeWidth="1.3" />
    <path d="M9 4v10M4 9h10" strokeWidth="2.6" />
  </svg>
);

const MinusCircle = () => (
  <svg viewBox="0 0 18 18" className="h-[18px] w-[18px]" fill="#fafafa" stroke="#858585">
    <circle cx="9" cy="9" r="8" strokeWidth="1.2" />
    <path d="M4 9h10" strokeWidth="1.6" />
  </svg>
);

const DetailsIcon = () => (
  <svg viewBox="0 0 16 18" className="h-[18px] w-4">
    <path d="m6 0 10 9-10 9z" fill="#000" />
    <path d="M1 4h7v11H1z" fill="#fff" stroke="#333" />
    <path d="M1 4h7v4H1z" fill="#3d86d8" />
    <path d="M2 10.500h5m-5 2h5" stroke="#777" />
  </svg>
);

const IconButton = ({ label, children }: { label: string; children: React.ReactNode }) => (
  <button type="button" aria-label={label} className="flex items-center justify-center">
    {children}
  </button>
);

function SoftenPanel() {
  return (
    <section>
      <SectionHeader title="가장자리 부드럽게" />
      <div className="flex h-[149px] flex-col pt-2 pr-[22px] pl-[9px] text-xs text-[#a0a0a0]">
        <label htmlFor="angle" className="pl-px leading-5">법선 간 각도:</label>
        <output htmlFor="angle" className="mt-[6px] pl-[126px] text-[13px] leading-5">17.3&nbsp; 도</output>
        <input
          id="angle"
          type="range"
          disabled
          max={180}
          defaultValue={18}
          className="mt-[10px] ml-2 block h-[18px] appearance-none bg-transparent [&::-webkit-slider-runnable-track]:h-[3px] [&::-webkit-slider-runnable-track]:border-t-2 [&::-webkit-slider-runnable-track]:border-b [&::-webkit-slider-runnable-track]:border-t-[#8f8f8f] [&::-webkit-slider-runnable-track]:border-b-white [&::-webkit-slider-thumb]:-mt-2 [&::-webkit-slider-thumb]:h-[17px] [&::-webkit-slider-thumb]:w-2 [&::-webkit-slider-thumb]:appearance-none [&::-webkit-slider-thumb]:rounded-b-[4px] [&::-webkit-slider-thumb]:border-r-2 [&::-webkit-slider-thumb]:border-b [&::-webkit-slider-thumb]:border-[#808080] [&::-webkit-slider-thumb]:bg-[#f7f7f7]"
        />
        <div className="mt-[3px] mr-1 ml-3 h-[3px] shrink-0 border-x border-black" />
        <div className="mt-[7px]">
          <DisabledCheck id="soft-normals" label="법선 부드럽게" checked />
          <DisabledCheck id="soft-coplanar" label="동일 평면 부드럽게" />
        </div>
      </div>
    </section>
  );
}

function LayersPanel() {
  const th = 'border-r-2 border-b-2 border-[#7d7d7d] text-left font-normal';
  return (
    <section>
      <SectionHeader title="레이어" />
      <div className="flex h-[33px] items-center gap-[10px] pr-[6px] pl-[7px]">
        <IconButton label="레이어 추가"><PlusCircle /></IconButton>
        <IconButton label="레이어 삭제"><MinusCircle /></IconButton>
        <span className="flex-1" />
        <IconButton label="세부 정보"><DetailsIcon /></IconButton>
      </div>
      <div className="h-[219px] bg-white">
        <table className="w-full table-fixed border-separate border-spacing-0 text-xs">
          <thead className="bg-[#f0f0f0] text-[11px] leading-[18px]">
            <tr>
              <th className={clsx(th, 'pl-[7px]')}>이름</th>
              <th className={clsx(th, 'w-[50px] pl-[7px]')}>보기</th>
              <th className={clsx(th, 'w-10 pl-[7px]')}>색상</th>
            </tr>
          </thead>
          <tbody>
            <tr className="h-7">
              <td className="pl-[6px]">
                <label className="flex items-center gap-1.5">
                  <input
                    type="radio"
                    name="layer"
                    defaultChecked
                    className="h-[13px] w-[13px] appearance-none rounded-full border border-[#444] checked:bg-black checked:shadow-[inset_0_0_0_1px_white]"
                  />
                  Layer0
                </label>
              </td>
              <td className="pl-[19px]">
                <span className="grid w-[14px] place-items-center">
                  <input type="checkbox" aria-label="Layer0 보기" defaultChecked className="peer col-start-1 row-start-1 h-[14px] w-[14px] appearance-none border border-[#333] bg-white" />
                  <svg viewBox="0 0 10 10" className="pointer-events-none col-start-1 row-start-1 hidden h-[10px] w-[10px] peer-checked:block" fill="none">
                    <path d="m1 5 3 3 5-7" stroke="#000" strokeWidth="1.4" />
                  </svg>
                </span>
              </td>
              <td className="pl-[10px]">
                <button type="button" aria-label="Layer0 색상" className="block h-5 w-5 border border-[#d96b6b] bg-[#ff5a58]" />
              </td>
            </tr>
          </tbody>
        </table>
      </div>
    </section>
  );
}

function ScenesPanel() {
  return (
    <section className="flex min-h-0 flex-1 flex-col">
      <SectionHeader title="장면" />
      <div className="flex h-[33px] shrink-0 items-center gap-[9px] border-b border-[#a0a0a0] pr-[6px] pl-[7px]">
        <IconButton label="장면 업데이트">
          <svg viewBox="0 0 18 18" className="h-[18px] w-[18px]" fill="none" stroke="#858585" strokeWidth="2">
            <path d="M2 8c1-6 9-8 13-3m1 5c-1 6-9 8-13 3" />
            <path d="M16 1v6h-6zM2 17v-6h6z" fill="#858585" stroke="none" />
          </svg>
        </IconButton>
        <IconButton label="장면 추가"><PlusCircle /></IconButton>
        <IconButton label="장면 제거"><MinusCircle /></IconButton>
        <span className="flex-1" />
        <IconButton label="아래로">
          <svg viewBox="0 0 12 16" className="mr-1 h-4 w-3" fill="none">
            <path d="M9 2H7L5 4v8" stroke="#858585" strokeWidth="2.4" />
            <path d="M1 10h8l-4 5z" fill="#858585" />
          </svg>
        </IconButton>
        <IconButton label="위로">
          <svg viewBox="0 0 12 16" className="mr-1 h-4 w-3" fill="none">
            <path d="M2 13h3l2-2V4" stroke="#858585" strokeWidth="2.4" />
            <path d="M3 6h8L7 1z" fill="#858585" />
          </svg>
        </IconButton>
        <IconButton label="보기 옵션">
          <svg viewBox="0 0 26 20" className="h-5 w-[26px]" fill="none" stroke="#111">
            <path d="M2 3h5v5H2zM2 13h5v5H2z" strokeWidth="1.6" />
            <path d="M10 3.500h7m-7 3.500h5m-5 6h7m-7 2.500h5m-5 2.500h7" strokeWidth="1.5" />
            <path d="M19 9h6l-3 4z" fill="#111" stroke="none" />
          </svg>
        </IconButton>
        <IconButton label="세부 정보 표시">
          <svg viewBox="0 0 12 18" className="mr-1 h-[18px] w-3">
            <path d="M.5.5h11v17H.5z" fill="#fff" stroke="#777" />
            <path d="M2 2h8L6 6.500zM.5 8h11v9.500H.5z" fill="#000" />
            <path d="M6 10v6m-3-3h6" stroke="#fff" strokeWidth="1.5" />
          </svg>
        </IconButton>
        <IconButton label="메뉴"><DetailsIcon /></IconButton>
      </div>
      <div className="flex-1 bg-white" />
    </section>
  );
}

function Tray() {
  return (
    <aside className="ml-[5px] flex w-[297px] shrink-0 flex-col bg-[#f0f0f0]">
      <div className="flex h-[27px] shrink-0 items-center bg-linear-to-b from-[#bfcedb] to-[#d6e2f1] pr-1 pl-1">
        <h1 className="flex-1 text-[15px] leading-5">기본 트레이</h1>
        <button type="button" aria-label="자동 숨기기" className="mr-[9px]">
          <svg viewBox="0 0 8 10" className="h-[10px] w-2" fill="none" stroke="#000">
            <path d="M2 1h4v5H2zM5.500 1v5M0 6.500h8M4 7v3" strokeWidth="1.3" />
          </svg>
        </button>
        <button type="button" aria-label="닫기" className="flex h-3 w-3 items-center justify-center bg-[#c04a4f]">
          <svg viewBox="0 0 6 6" className="h-[6px] w-[6px]" stroke="#fff" strokeWidth="1.5">
            <path d="m1 1 4 4m0-4L1 5" />
          </svg>
        </button>
      </div>
      <div className="flex min-h-0 flex-1">
        <div className="flex min-w-0 flex-1 flex-col">
          <fieldset className="h-[94px] shrink-0 pl-1">
            <legend className="float-left text-[13px] leading-[18px]">표시:</legend>
            <div className="clear-both flex flex-col gap-0.5 pt-0.5 pl-[70px]">
              <DisabledCheck id="shadow-faces" label="면에" checked />
              <DisabledCheck id="shadow-ground" label="바닥에" checked />
              <DisabledCheck id="shadow-edges" label="가장자리에" />
            </div>
          </fieldset>
          <SoftenPanel />
          <LayersPanel />
          <div className="mt-[2px] mb-px h-[6px] shrink-0 border border-[#b4b4b4]" />
          <ScenesPanel />
        </div>
        <div className="flex w-[21px] shrink-0 flex-col items-center border-l border-[#fafafa]">
          <button type="button" aria-label="위로 스크롤" className="flex h-6 items-center">
            <ChevronUp className="h-[14px] w-[14px] text-[#555]" strokeWidth={4} />
          </button>
          <div className="flex-1" />
          <div className="mb-[60px] h-[21px] w-[19px] bg-[#cdcdcd]" />
          <button type="button" aria-label="아래로 스크롤" className="flex h-6 items-center">
            <ChevronDown className="h-[14px] w-[14px] text-[#555]" strokeWidth={4} />
          </button>
        </div>
      </div>
    </aside>
  );
}

function StatusBar() {
  return (
    <footer className="flex h-6 shrink-0 bg-[#f0f0f0] px-[6px] pt-px text-base leading-[23px]">
      <div className="flex items-end gap-4 pl-px">
        <button type="button" aria-label="지리적 위치">
          <svg viewBox="0 0 18 18" className="h-[18px] w-[18px]">
            <circle cx="9" cy="9" r="8" fill="#f4f4f4" stroke="#999" />
            <path d="M9 15C7 11 6 9 6 7a3 3 0 0 1 6 0c0 2-1 4-3 8z" fill="#8c8c8c" />
          </svg>
        </button>
        <button type="button" aria-label="크레딧">
          <svg viewBox="0 0 18 18" className="h-[18px] w-[18px]">
            <circle cx="9" cy="9" r="8" fill="#fff" stroke="#000" strokeWidth="1.5" />
            <circle cx="9" cy="4.5" r="1.6" />
            <path d="M7 7h4v4h-1v4H8v-4H7z" />
          </svg>
        </button>
        <button type="button" aria-label="로그인">
          <svg viewBox="0 0 18 18" className="h-[18px] w-[18px]">
            <circle cx="9" cy="9" r="8" fill="#e4e4e4" stroke="#999" />
            <circle cx="9" cy="6.5" r="3.2" fill="#999" />
            <path d="M3 15c0-6 12-6 12 0-3 3-9 3-12 0z" fill="#999" />
          </svg>
        </button>
      </div>
      <div className="mt-[7px] mr-3 ml-3 h-[14px] border-l border-[#8c8c8c]" />
      <p className="flex-1 pt-[3px] text-[17px] leading-5 whitespace-pre">밀거나 끌 면을 선택합니다.  Ctrl = 새 시작 면 만들기 토글</p>
      <div className="mt-[7px] mr-[10px] h-[14px] border-l border-[#8c8c8c]" />
      <label htmlFor="measure" className="pt-[3px] leading-5">거리</label>
      <input
        id="measure"
        defaultValue="-50mm"
        className="ml-[11px] h-[23px] w-[250px] shrink-0 border border-b-0 border-[#a9b7c9] bg-white px-[3px] pt-[5px] text-[15px] leading-4"
      />
    </footer>
  );
}

const menus = ['파일(F)', '편집(E)', '보기(V)', '카메라(C)', '그리기(R)', '도구(T)', '창(W)', '도움말(H)'];

export default function App() {
  const [active, setActive] = React.useState('push');

  return (
    <div className="flex h-screen flex-col bg-black py-[42px] font-['Open_Sans','Noto_Sans_CJK_KR',sans-serif] text-black">
      <nav className="flex h-[25px] shrink-0 items-center gap-[15px] bg-white px-[7px] pt-0.5 text-base leading-6">
        {menus.map((menu) => (
          <button key={menu} type="button" className="shrink-0">{menu}</button>
        ))}
      </nav>
      <div className="shrink-0">
        <MainToolbar active={active} onPick={setActive} />
      </div>
      <div className="flex min-h-0 flex-1 bg-[#f0f0f0]">
        <Palette active={active} onPick={setActive} />
        <Scene />
        <Tray />
      </div>
      <StatusBar />
    </div>
  );
}
